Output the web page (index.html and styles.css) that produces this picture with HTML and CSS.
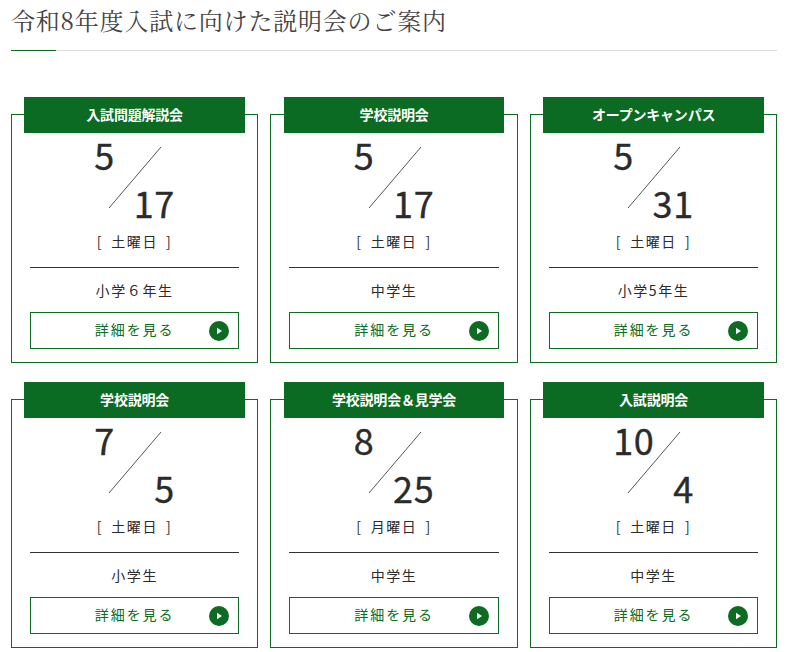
FILE: index.html
```html
<!DOCTYPE html>
<html lang="ja">
<head>
<meta charset="utf-8">
<title>説明会のご案内</title>
<link rel="stylesheet" href="styles.css">
</head>
<body>
<main class="page">
  <h2 class="title">令和8年度入試に向けた説明会のご案内</h2>
  <div class="cards">
    <article class="card">
      <h3 class="card-head">入試問題解説会</h3>
      <div class="date"><span class="month">5</span><svg class="slash" viewBox="0 0 54 63"><line x1="1" y1="62" x2="53" y2="1"/></svg><span class="day">17</span></div>
      <p class="week">[<span>土曜日</span>]</p>
      <p class="target">小学６年生</p>
      <a class="more" href="#">詳細を見る<svg class="go" viewBox="0 0 20 20"><circle cx="10" cy="10" r="10"/><path d="M8 6.8 13 10 8 13.2z"/></svg></a>
    </article>
    <article class="card">
      <h3 class="card-head">学校説明会</h3>
      <div class="date"><span class="month">5</span><svg class="slash" viewBox="0 0 54 63"><line x1="1" y1="62" x2="53" y2="1"/></svg><span class="day">17</span></div>
      <p class="week">[<span>土曜日</span>]</p>
      <p class="target">中学生</p>
      <a class="more" href="#">詳細を見る<svg class="go" viewBox="0 0 20 20"><circle cx="10" cy="10" r="10"/><path d="M8 6.8 13 10 8 13.2z"/></svg></a>
    </article>
    <article class="card">
      <h3 class="card-head">オープンキャンパス</h3>
      <div class="date"><span class="month">5</span><svg class="slash" viewBox="0 0 54 63"><line x1="1" y1="62" x2="53" y2="1"/></svg><span class="day">31</span></div>
      <p class="week">[<span>土曜日</span>]</p>
      <p class="target">小学5年生</p>
      <a class="more" href="#">詳細を見る<svg class="go" viewBox="0 0 20 20"><circle cx="10" cy="10" r="10"/><path d="M8 6.8 13 10 8 13.2z"/></svg></a>
    </article>
    <article class="card">
      <h3 class="card-head">学校説明会</h3>
      <div class="date"><span class="month">7</span><svg class="slash" viewBox="0 0 54 63"><line x1="1" y1="62" x2="53" y2="1"/></svg><span class="day">5</span></div>
      <p class="week">[<span>土曜日</span>]</p>
      <p class="target">小学生</p>
      <a class="more" href="#">詳細を見る<svg class="go" viewBox="0 0 20 20"><circle cx="10" cy="10" r="10"/><path d="M8 6.8 13 10 8 13.2z"/></svg></a>
    </article>
    <article class="card">
      <h3 class="card-head">学校説明会＆見学会</h3>
      <div class="date"><span class="month">8</span><svg class="slash" viewBox="0 0 54 63"><line x1="1" y1="62" x2="53" y2="1"/></svg><span class="day">25</span></div>
      <p class="week">[<span>月曜日</span>]</p>
      <p class="target">中学生</p>
      <a class="more" href="#">詳細を見る<svg class="go" viewBox="0 0 20 20"><circle cx="10" cy="10" r="10"/><path d="M8 6.8 13 10 8 13.2z"/></svg></a>
    </article>
    <article class="card">
      <h3 class="card-head">入試説明会</h3>
      <div class="date"><span class="month">10</span><svg class="slash" viewBox="0 0 54 63"><line x1="1" y1="62" x2="53" y2="1"/></svg><span class="day">4</span></div>
      <p class="week">[<span>土曜日</span>]</p>
      <p class="target">中学生</p>
      <a class="more" href="#">詳細を見る<svg class="go" viewBox="0 0 20 20"><circle cx="10" cy="10" r="10"/><path d="M8 6.8 13 10 8 13.2z"/></svg></a>
    </article>
  </div>
</main>
</body>
</html>
```
FILE: styles.css
```css
* { box-sizing: border-box; }
html, body { margin: 0; padding: 0; background: #fff; }
body { font-family: "Noto Sans CJK JP", "Noto Sans", sans-serif; color: #333; overflow: hidden; }
.page { width: 766px; margin-left: 11px; }
.title {
  position: relative;
  margin: 0;
  height: 51px;
  padding-top: 2px;
  font-family: "Noto Serif CJK JP", "Liberation Serif", "Noto Sans CJK JP", serif;
  font-size: 24px;
  line-height: 36px;
  font-weight: 400;
  letter-spacing: 0.8px;
  color: #444;
  border-bottom: 1px solid #ddd;
}
.title::after {
  content: "";
  position: absolute;
  left: 0;
  bottom: -1px;
  width: 45px;
  height: 1px;
  background: #0d6b22;
}
.cards {
  display: grid;
  grid-template-columns: repeat(3, 247.2px);
  column-gap: 12.3px;
  row-gap: 36px;
  width: 766px;
  margin-top: 63px;
}
.card {
  height: 249px;
  padding: 0 18px;
  border: 1px solid #0d6b22;
  text-align: center;
}
.card-head {
  margin: -18px -5.7px 0;
  height: 36px;
  background: #0c6b22;
  color: #fff;
  font-size: 14px;
  font-weight: 700;
  line-height: 35px;
  letter-spacing: -0.2px;
}
.date {
  position: relative;
  display: flex;
  justify-content: space-between;
  width: 80.5px;
  height: 95px;
  margin-left: 64.3px;
  font-size: 36px;
  line-height: 42px;
  letter-spacing: 0.6px;
  color: #2b2b2b;
  -webkit-text-stroke: 0.35px #2b2b2b;
}
.month { align-self: flex-start; }
.day { align-self: flex-end; margin-bottom: 5px; margin-left: auto; }
.slash {
  position: absolute;
  left: 14px;
  top: 13px;
  width: 54px;
  height: 63px;
}
.slash line { stroke: #555; stroke-width: 1; }
.week {
  display: flex;
  justify-content: center;
  gap: 8px;
  margin: 0;
  height: 40px;
  padding-top: 1px;
  font-size: 14px;
  line-height: 24px;
  letter-spacing: 1.6px;
  color: #2b2b2b;
  border-bottom: 1px solid #333;
}
.target {
  margin: 0;
  height: 44px;
  font-size: 14px;
  line-height: 45px;
  letter-spacing: 1.6px;
  color: #2b2b2b;
}
.more {
  position: relative;
  display: block;
  height: 37px;
  border: 1px solid #0d6b22;
  color: #0d6b22;
  font-size: 14px;
  line-height: 33px;
  letter-spacing: 1.9px;
  text-decoration: none;
}
.go {
  position: absolute;
  right: 9px;
  top: 8px;
  width: 20px;
  height: 20px;
}
.go circle { fill: #0d6b22; }
.go path { fill: #fff; }
```
